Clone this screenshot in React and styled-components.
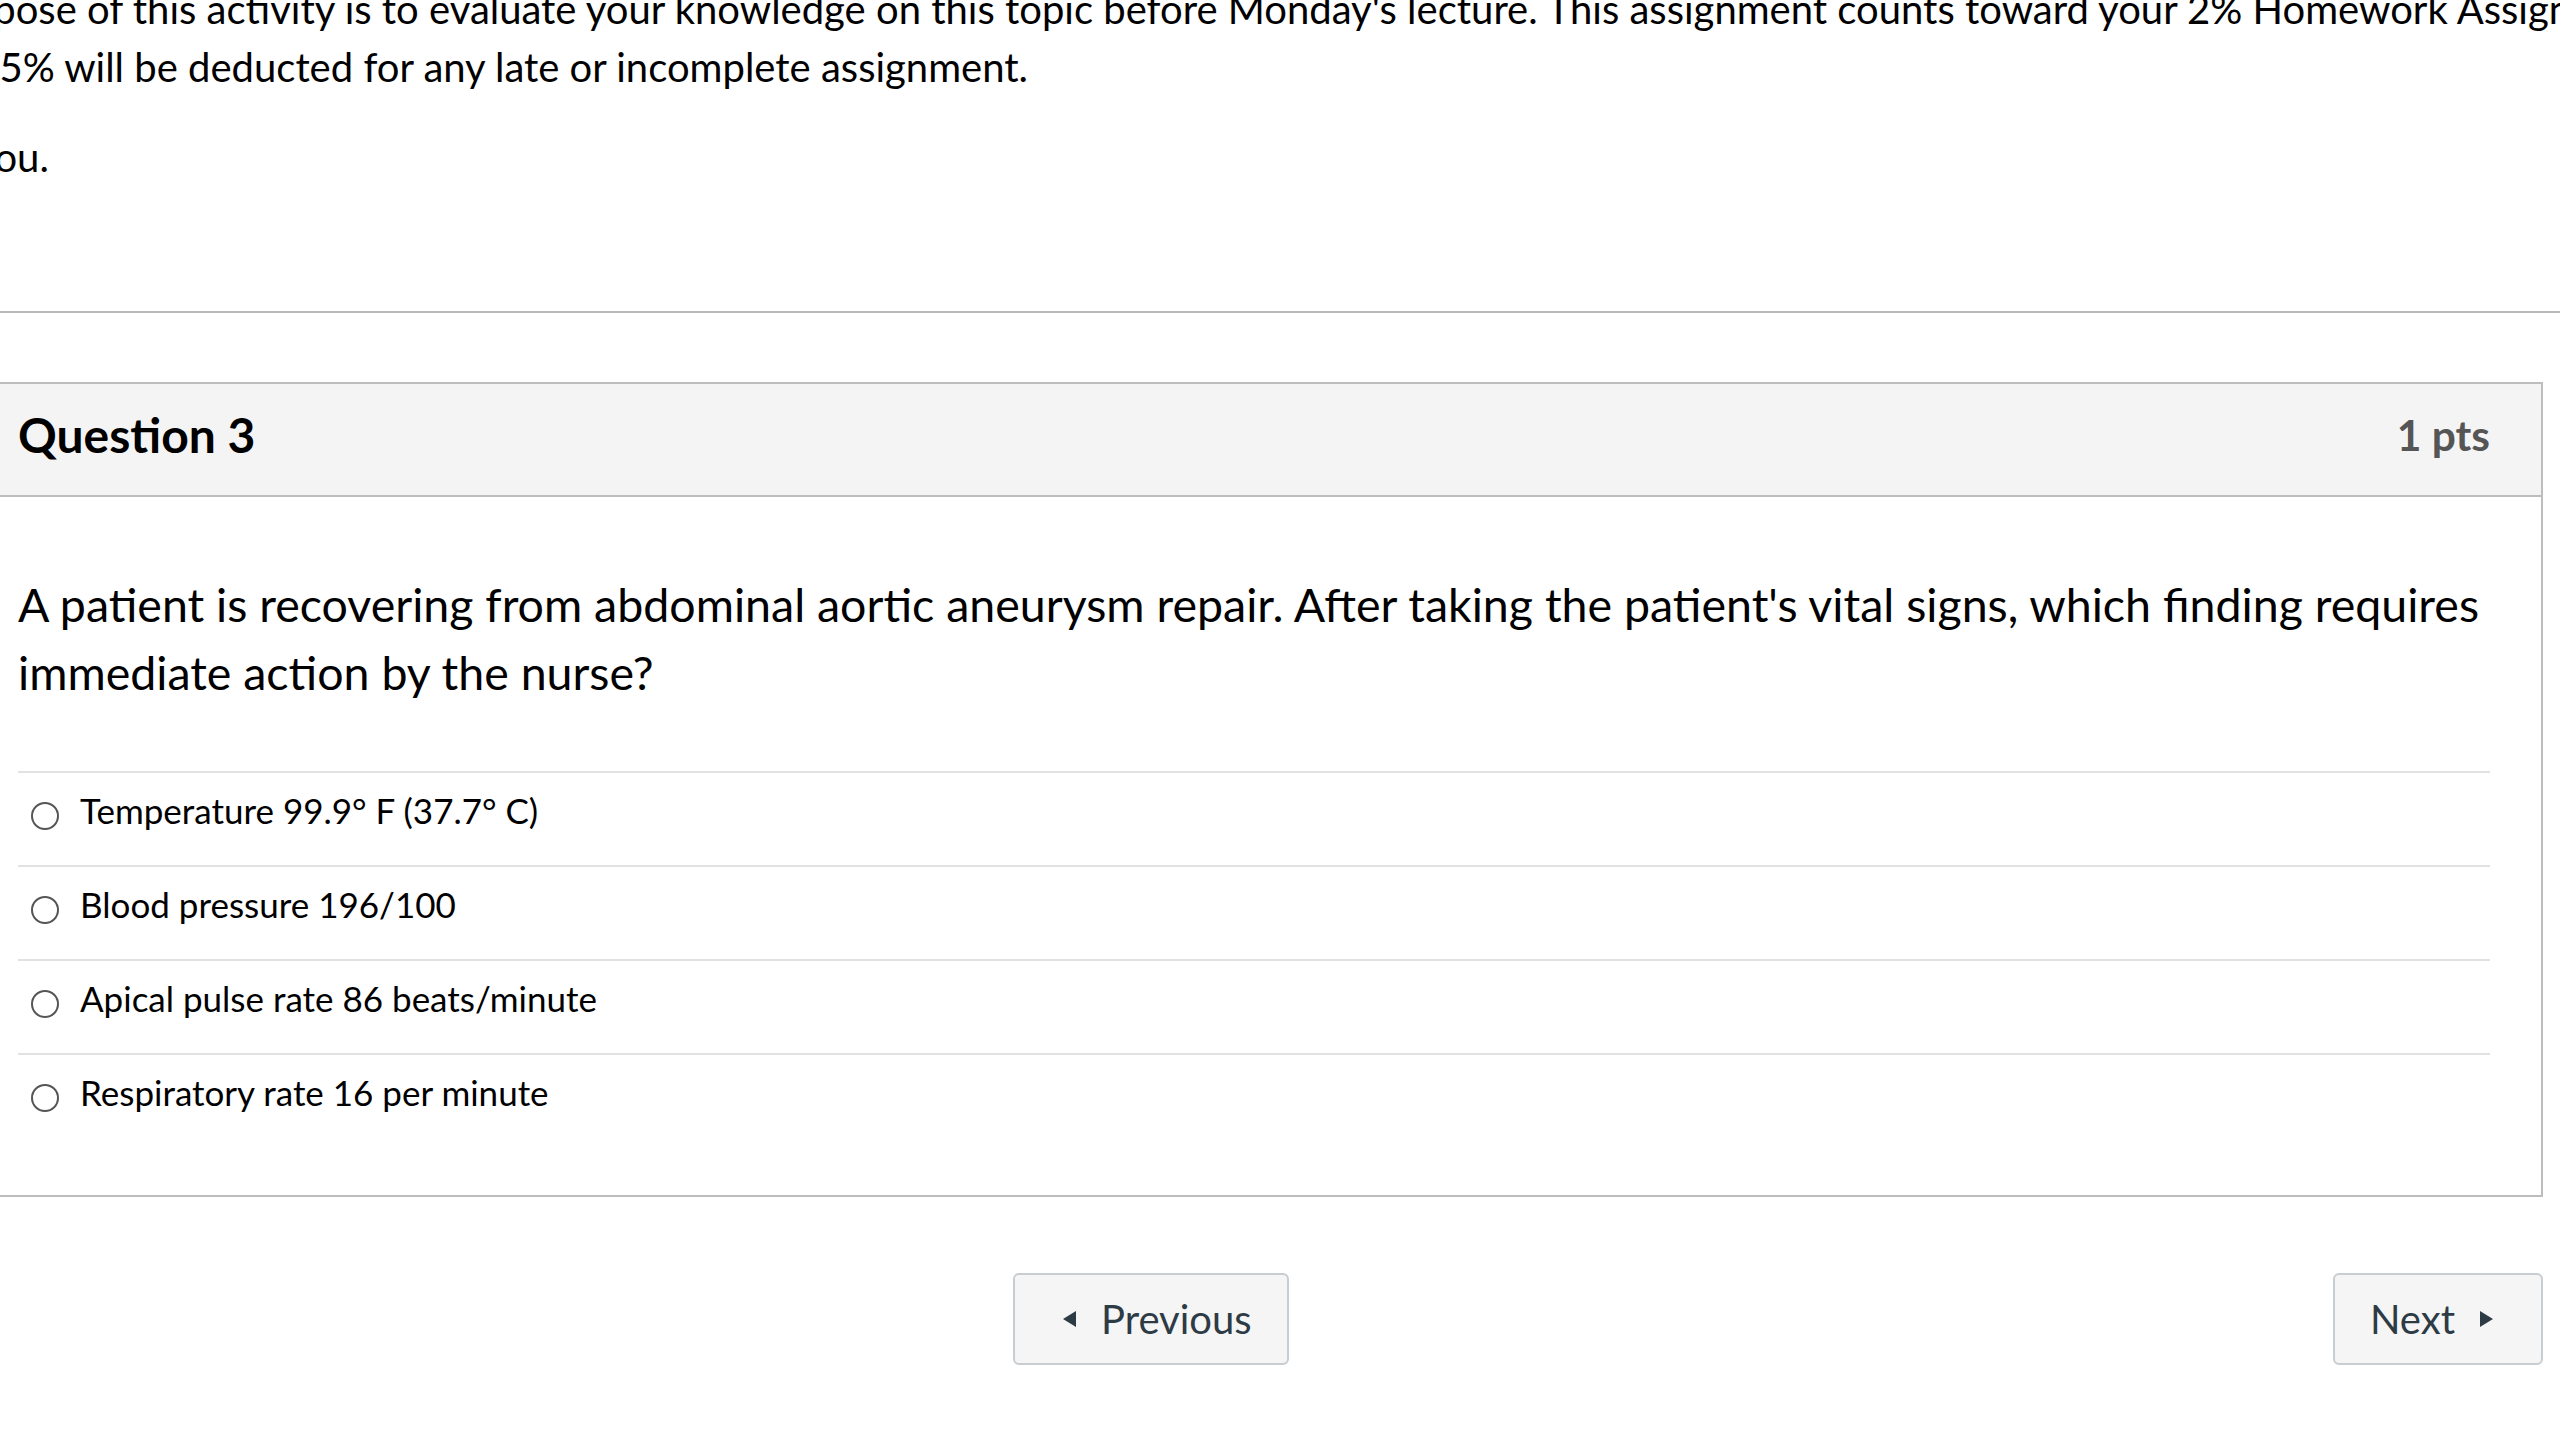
import React from "react";
import styled, { createGlobalStyle } from "styled-components";

const GlobalStyle = createGlobalStyle`
  html, body {
    margin: 0;
    padding: 0;
    background: #fff;
    overflow: hidden;
  }
  body {
    font-family: Lato, "Open Sans", sans-serif;
    color: #000;
  }
`;

const Page = styled.div`
  width: 2560px;
  height: 1440px;
  overflow: hidden;
  margin-top: -20px;
`;

const Description = styled.div`
  margin-left: -143px;
  font-size: 40px;
  line-height: 58px;
  white-space: nowrap;
`;

const Para = styled.p`
  margin: 0 0 32px 0;
`;

const Rule = styled.hr`
  margin: 125px 0 0 0;
  border: none;
  border-top: 2px solid #b9b9b9;
  width: 2600px;
`;

const Main = styled.div`
  margin-left: -20px;
  width: 2563px;
`;

const QuestionBox = styled.div`
  margin-top: 69px;
  border: 2px solid #bdbdbd;
  background: #fff;
`;

const Header = styled.div`
  height: 113px;
  box-sizing: border-box;
  padding: 0 51px 10px 36px;
  display: flex;
  align-items: center;
  justify-content: space-between;
  background: #f4f4f4;
  border-bottom: 2px solid #bdbdbd;
`;

const Title = styled.h2`
  margin: 0;
  font-size: 48px;
  font-weight: 700;
  line-height: 56px;
  color: #000;
`;

const Points = styled.span`
  font-size: 42.5px;
  font-weight: 700;
  color: #555;
`;

const Body = styled.div`
  padding: 73px 51px 48px 36px;
`;

const QuestionText = styled.div`
  font-size: 46.5px;
  line-height: 68px;
  margin-bottom: 65px;
`;

const Answer = styled.label`
  display: flex;
  align-items: flex-start;
  padding: 17px 0 35px 0;
  border-top: 2px solid #e2e2e2;
  font-size: 35px;
  line-height: 40px;
`;

const Radio = styled.span`
  flex: none;
  width: 24px;
  height: 24px;
  margin: 12px 21px 0 13px;
  border: 2px solid #555;
  border-radius: 50%;
  background: #fff;
`;

const Nav = styled.div`
  display: flex;
  align-items: center;
  margin-top: 76px;
`;

const NavButton = styled.button`
  display: flex;
  align-items: center;
  gap: 25px;
  height: 92px;
  box-sizing: border-box;
  padding: ${(p) => (p.$next ? "0 48px 0 35px" : "0 35px 0 48px")};
  margin-left: ${(p) => (p.$next ? "auto" : "1033px")};
  background: #f5f5f5;
  border: 2px solid #c7cdd1;
  border-radius: 6px;
  color: #2d3b45;
  font-family: Lato, sans-serif;
  font-size: 40px;
  cursor: pointer;
`;

const Arrow = ({ dir }) => (
  <svg width="13" height="16" viewBox="0 0 13 16">
    {dir === "left" ? (
      <polygon points="13,0 13,16 0,8" fill="#2d3b45" />
    ) : (
      <polygon points="0,0 0,16 13,8" fill="#2d3b45" />
    )}
  </svg>
);

const answers = [
  "Temperature 99.9° F (37.7° C)",
  "Blood pressure 196/100",
  "Apical pulse rate 86 beats/minute",
  "Respiratory rate 16 per minute",
];

export default function App() {
  return (
    <>
      <GlobalStyle />
      <Page>
        <Description>
          <Para>
            The purpose of this activity is to evaluate your knowledge on this topic before Monday's lecture. This assignment counts toward your 2% Homework Assignment grade.
            <br />
            Note: A 5% will be deducted for any late or incomplete assignment.
          </Para>
          <Para>Thank you.</Para>
        </Description>
        <Rule />
        <Main>
          <QuestionBox>
            <Header>
              <Title>Question 3</Title>
              <Points>1 pts</Points>
            </Header>
            <Body>
              <QuestionText>
                A patient is recovering from abdominal aortic aneurysm repair. After taking the patient's vital signs, which finding requires immediate action by the nurse?
              </QuestionText>
              {answers.map((a) => (
                <Answer key={a}>
                  <Radio />
                  {a}
                </Answer>
              ))}
            </Body>
          </QuestionBox>
          <Nav>
            <NavButton>
              <Arrow dir="left" />
              Previous
            </NavButton>
            <NavButton $next>
              Next
              <Arrow dir="right" />
            </NavButton>
          </Nav>
        </Main>
      </Page>
    </>
  );
}
